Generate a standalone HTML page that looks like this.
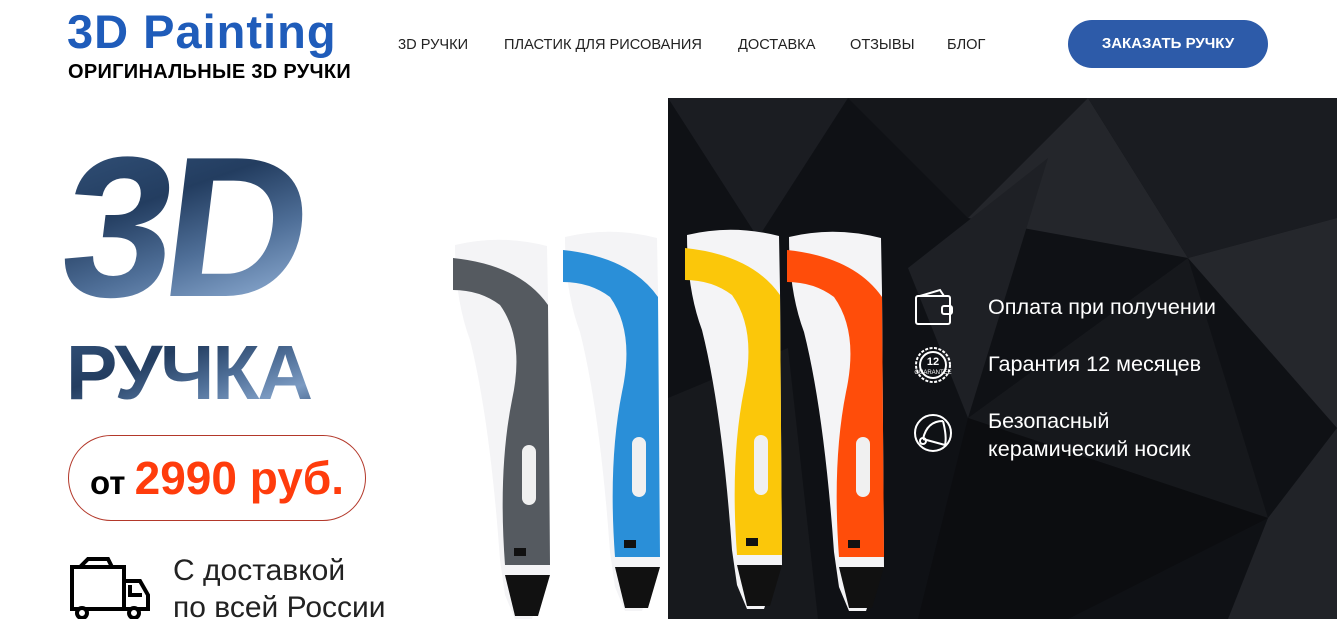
<!DOCTYPE html>
<html><head><meta charset="utf-8"><style>
*{margin:0;padding:0;box-sizing:border-box}
body{width:1337px;height:619px;overflow:hidden;background:#fff;font-family:"Liberation Sans",sans-serif;position:relative}
.a{position:absolute;white-space:nowrap}
.nav{top:37px;font-size:14.6px;color:#222}
.grad{background:linear-gradient(160deg,#34547c 0%,#233d60 35%,#4f6f98 60%,#7c9bc2 80%,#34547c 100%);-webkit-background-clip:text;background-clip:text;color:transparent}
.ft{color:#fff;font-size:21.6px;left:988px}
</style></head><body>
<div class="a" style="left:67px;top:4px;font-size:47px;font-weight:bold;color:#1f5cba;letter-spacing:1px">3D Painting</div>
<div class="a" style="left:68px;top:61px;font-size:20px;font-weight:bold;color:#000;letter-spacing:0.3px">ОРИГИНАЛЬНЫЕ 3D РУЧКИ</div>
<div class="a nav" style="left:398px">3D РУЧКИ</div>
<div class="a nav" style="left:504px">ПЛАСТИК ДЛЯ РИСОВАНИЯ</div>
<div class="a nav" style="left:738px">ДОСТАВКА</div>
<div class="a nav" style="left:850px">ОТЗЫВЫ</div>
<div class="a nav" style="left:947px">БЛОГ</div>
<div class="a" style="left:1068px;top:20px;width:200px;height:48px;border-radius:24px;background:#2d5ba9;color:#fff;font-weight:bold;font-size:15px;text-align:center;line-height:48px">ЗАКАЗАТЬ РУЧКУ</div>

<div class="a" style="left:668px;top:98px;width:669px;height:521px;background:#0f1115;overflow:hidden">
<svg width="669" height="521">
<polygon points="0,0 180,0 90,140" fill="#1b1d22"/>
<polygon points="180,0 420,0 300,120" fill="#15171b"/>
<polygon points="300,120 420,0 520,160" fill="#24262b"/>
<polygon points="420,0 669,0 669,120 520,160" fill="#1a1c21"/>
<polygon points="520,160 669,120 669,330" fill="#25272c"/>
<polygon points="240,170 380,60 300,320" fill="#1e2025"/>
<polygon points="300,320 520,160 600,420" fill="#16181c"/>
<polygon points="600,420 669,330 669,521 560,521" fill="#212328"/>
<polygon points="300,320 600,420 400,521 250,521" fill="#0c0d10"/>
<polygon points="0,300 120,250 150,521 0,521" fill="#17191d"/>
</svg>
</div>

<div class="a grad" style="left:64px;top:128px;font-size:200px;font-weight:bold;letter-spacing:-10px;line-height:200px;padding-right:20px;transform:skewX(-7deg)">3D</div>
<div class="a grad" style="left:66px;top:328px;font-size:77px;font-weight:bold;letter-spacing:-2px;line-height:90px">РУЧКА</div>

<div class="a" style="left:68px;top:435px;width:298px;height:86px;border:1px solid #b3382a;border-radius:43px;text-align:center;line-height:84px;white-space:nowrap">
<span style="font-size:33px;font-weight:bold;color:#000">от </span><span style="font-size:46px;font-weight:bold;color:#ff3c0c">2990 руб.</span></div>

<svg class="a" style="left:68px;top:557px" width="84" height="62" viewBox="0 0 84 62" fill="none" stroke="#000" stroke-width="4">
<path d="M4,10 H56 V52 H4 Z M12,10 L20,2 H40 L44,10"/><path d="M56,24 H72 L80,38 V52 H56"/><path d="M62,28 V38 H74"/><circle cx="14" cy="56" r="5" fill="#fff"/><circle cx="66" cy="56" r="5" fill="#fff"/>
</svg>
<div class="a" style="left:173px;top:552px;font-size:30px;color:#222;line-height:37px;font-weight:300">С доставкой<br>по всей России</div>

<svg class="a" style="left:440px;top:220px" width="460" height="399">
<defs><g id="pen">
<path d="M15,25 Q60,14 107,26 L108,80 L110,355 L100,375 L92,399 L75,399 L65,375 L60,340 Q50,200 30,120 Q15,80 15,25 Z" fill="#f4f4f6"/>
<path d="M13,38 Q80,45 108,85 L110,345 L65,345 Q58,250 72,180 Q85,120 60,85 Q40,70 13,70 Z" fill="currentColor"/>
<rect x="82" y="225" width="14" height="60" rx="7" fill="#f0f0f0"/>
<rect x="74" y="328" width="12" height="8" fill="#111"/>
<path d="M65,355 L110,355 L98,396 L75,396 Z" fill="#111"/>
</g></defs>
<use href="#pen" x="0" y="0" style="color:#555a60"/>
<use href="#pen" x="110" y="-8" style="color:#2a8fd8"/>
<use href="#pen" x="232" y="-10" style="color:#fbc70a"/>
<use href="#pen" x="334" y="-8" style="color:#ff4d0a"/>
</svg>

<svg class="a" style="left:914px;top:288px" width="40" height="40" viewBox="0 0 40 40" fill="none" stroke="#fff" stroke-width="2"><rect x="2" y="8" width="34" height="28" rx="2"/><path d="M6,8 L26,2 L30,8"/><rect x="28" y="18" width="10" height="8" rx="2"/></svg>
<svg class="a" style="left:914px;top:346px" width="38" height="38" viewBox="0 0 38 38" fill="none" stroke="#fff" stroke-width="2"><circle cx="19" cy="19" r="17" stroke-dasharray="3 1.5"/><circle cx="19" cy="19" r="13"/><text x="19" y="19" font-size="11" fill="#fff" stroke="none" text-anchor="middle" font-family="Liberation Sans" font-weight="bold">12</text><text x="19" y="28" font-size="6" fill="#fff" stroke="none" text-anchor="middle" font-family="Liberation Sans">GUARANTEE</text></svg>
<svg class="a" style="left:913px;top:413px" width="40" height="40" viewBox="0 0 40 40" fill="none" stroke="#fff" stroke-width="2"><circle cx="20" cy="20" r="18"/><path d="M30,8 Q14,8 10,26 M30,8 Q34,24 32,32 L10,26"/><circle cx="10" cy="28" r="3"/></svg>

<div class="a ft" style="top:294px">Оплата при получении</div>
<div class="a ft" style="top:351px">Гарантия 12 месяцев</div>
<div class="a ft" style="top:407px;line-height:28px">Безопасный<br>керамический носик</div>
</body></html>
